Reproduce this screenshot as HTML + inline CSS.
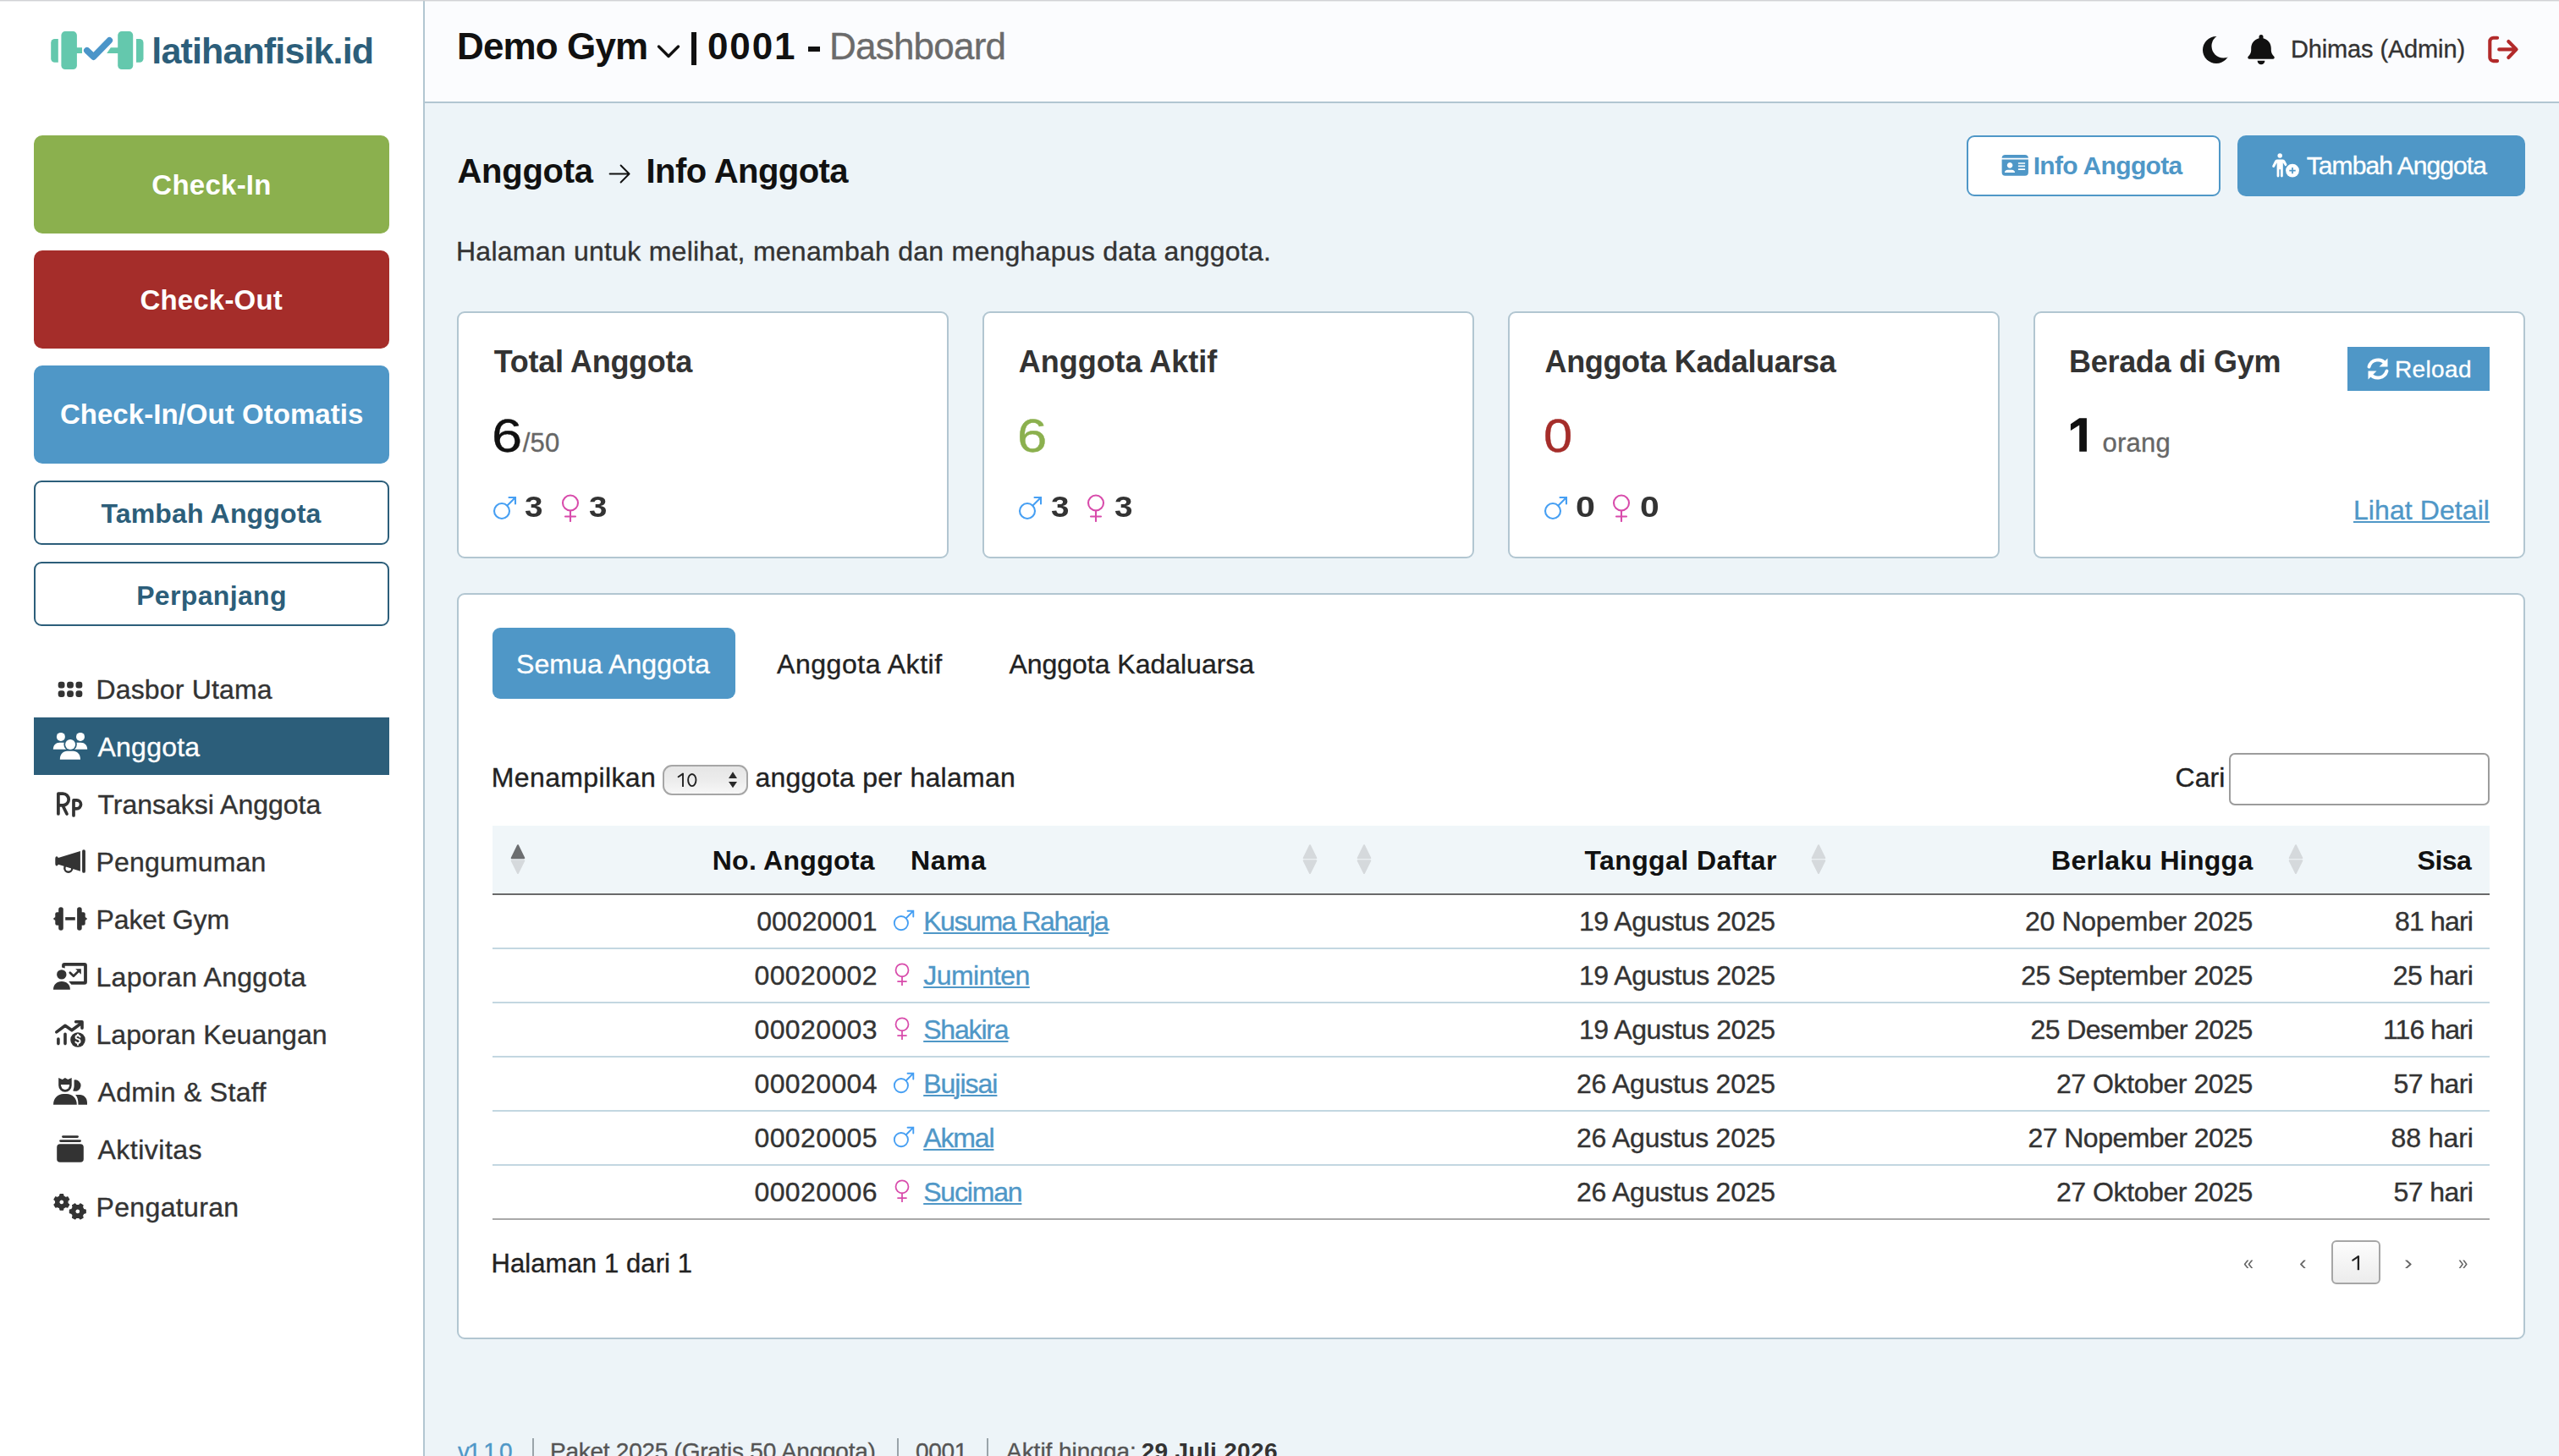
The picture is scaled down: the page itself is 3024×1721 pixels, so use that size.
<!DOCTYPE html>
<html><head><meta charset="utf-8"><title>Anggota - latihanfisik.id</title>
<style>
html,body{margin:0;padding:0;}
body{width:3024px;height:1721px;overflow:hidden;position:relative;font-family:"Liberation Sans", sans-serif;}
.t{position:absolute;white-space:nowrap;line-height:0;height:0;}
.r{position:absolute;display:block;}
@media (max-width:2000px){body{zoom:0.5;}}
</style></head><body>
<div class="r" style="left:0px;top:0px;width:3024px;height:1721px;background:#edf4f8"></div>
<div class="r" style="left:0px;top:0px;width:500px;height:1721px;background:#ffffff"></div>
<div class="r" style="left:500px;top:0px;width:2px;height:1721px;background:#b2c6d1"></div>
<div class="r" style="left:502px;top:0px;width:2522px;height:120px;background:#fbfcfe"></div>
<div class="r" style="left:502px;top:120px;width:2522px;height:2px;background:#b2c6d1"></div>
<div class="r" style="left:0px;top:0px;width:3024px;height:1px;background:#d1d2d5"></div>
<div class="r" style="left:0px;top:1px;width:3024px;height:1px;background:rgba(200,202,206,0.35)"></div>
<svg class="r" style="left:50px;top:30px" width="130" height="60" viewBox="0 0 130 60"><g fill="#64c8ad"><path d="M18.8 16 H14.7 A4.5 4.5 0 0 0 10.2 20.5 V39.2 A4.5 4.5 0 0 0 14.7 43.7 H18.8 Z"/><rect x="22.4" y="7.1" width="18.5" height="45" rx="4.6"/><rect x="40" y="26.2" width="7" height="6.8"/><path d="M80.8 26.2 H90 V33 H76.2 Z"/><rect x="89.2" y="7.1" width="18" height="45" rx="4.6"/><path d="M111 16 H115 A4.5 4.5 0 0 1 119.5 20.5 V39.2 A4.5 4.5 0 0 1 115 43.7 H111 Z"/></g><path d="M52.8 29.7 L60.5 37.1 L79.3 17.8" fill="none" stroke="#fff" stroke-width="11.5" stroke-linecap="round" stroke-linejoin="round"/><path d="M52.8 29.7 L60.5 37.1 L79.3 17.8" fill="none" stroke="#4b95c9" stroke-width="7.6" stroke-linecap="round" stroke-linejoin="round"/></svg>
<div class="t" style="top:59.6px;font-size:43px;font-weight:700;color:#2c5e7a;left:179.30px;letter-spacing:-0.858px;">latihanfisik.id</div>
<div class="r" style="left:40px;top:160px;width:420px;height:116px;background:#8bb04e;border-radius:10px"></div>
<div class="r" style="left:40px;top:296px;width:420px;height:116px;background:#a52d2a;border-radius:10px"></div>
<div class="r" style="left:40px;top:432px;width:420px;height:116px;background:#4f97c7;border-radius:10px"></div>
<div class="r" style="left:40px;top:568px;width:420px;height:76px;background:#fff;border:2px solid #2c5e7a;border-radius:9px;box-sizing:border-box"></div>
<div class="r" style="left:40px;top:664px;width:420px;height:76px;background:#fff;border:2px solid #2c5e7a;border-radius:9px;box-sizing:border-box"></div>
<div class="t" style="top:218.6px;font-size:33px;font-weight:700;color:#fff;left:179.30px;letter-spacing:0.256px;">Check-In</div>
<div class="t" style="top:354.9px;font-size:33px;font-weight:700;color:#fff;left:165.50px;letter-spacing:0.167px;">Check-Out</div>
<div class="t" style="top:490.1px;font-size:33px;font-weight:700;color:#fff;left:70.90px;letter-spacing:0.046px;">Check-In/Out Otomatis</div>
<div class="t" style="top:607.0px;font-size:32px;font-weight:700;color:#2c5e7a;left:119.40px;letter-spacing:0.173px;">Tambah Anggota</div>
<div class="t" style="top:703.5px;font-size:32px;font-weight:700;color:#2c5e7a;left:161.20px;letter-spacing:0.342px;">Perpanjang</div>
<div class="r" style="left:40px;top:848px;width:420px;height:68px;background:#2c5e7a"></div>
<div class="t" style="top:814.8px;font-size:32px;font-weight:400;color:#333333;-webkit-text-stroke:0.35px currentColor;left:113.50px;letter-spacing:0.155px;">Dasbor Utama</div>
<div class="t" style="top:882.8px;font-size:32px;font-weight:400;color:#fff;-webkit-text-stroke:0.35px currentColor;left:115.50px;letter-spacing:0.230px;">Anggota</div>
<div class="t" style="top:950.8px;font-size:32px;font-weight:400;color:#333333;-webkit-text-stroke:0.35px currentColor;left:115.50px;letter-spacing:-0.008px;">Transaksi Anggota</div>
<div class="t" style="top:1018.8px;font-size:32px;font-weight:400;color:#333333;-webkit-text-stroke:0.35px currentColor;left:113.50px;letter-spacing:0.174px;">Pengumuman</div>
<div class="t" style="top:1086.8px;font-size:32px;font-weight:400;color:#333333;-webkit-text-stroke:0.35px currentColor;left:113.50px;letter-spacing:-0.089px;">Paket Gym</div>
<div class="t" style="top:1154.8px;font-size:32px;font-weight:400;color:#333333;-webkit-text-stroke:0.35px currentColor;left:113.50px;letter-spacing:0.304px;">Laporan Anggota</div>
<div class="t" style="top:1222.8px;font-size:32px;font-weight:400;color:#333333;-webkit-text-stroke:0.35px currentColor;left:113.50px;letter-spacing:0.056px;">Laporan Keuangan</div>
<div class="t" style="top:1290.8px;font-size:32px;font-weight:400;color:#333333;-webkit-text-stroke:0.35px currentColor;left:115.50px;letter-spacing:0.311px;">Admin &amp; Staff</div>
<div class="t" style="top:1358.8px;font-size:32px;font-weight:400;color:#333333;-webkit-text-stroke:0.35px currentColor;left:115.50px;letter-spacing:0.495px;">Aktivitas</div>
<div class="t" style="top:1426.8px;font-size:32px;font-weight:400;color:#333333;-webkit-text-stroke:0.35px currentColor;left:113.50px;letter-spacing:0.348px;">Pengaturan</div>
<div class="t" style="top:55.2px;font-size:44px;font-weight:700;color:#111;left:540.00px;letter-spacing:-0.881px;">Demo Gym</div>
<svg class="r" style="left:774px;top:50px" width="32" height="22" viewBox="0 0 32 22"><path d="M4.5 5 L16 16.5 L27.5 5" fill="none" stroke="#111" stroke-width="3.4" stroke-linecap="round" stroke-linejoin="round"/></svg>
<div class="r" style="left:817px;top:38px;width:6px;height:39px;background:#111"></div>
<div class="t" style="top:55.2px;font-size:44px;font-weight:700;color:#111;left:836.00px;letter-spacing:1.863px;">0001</div>
<div class="r" style="left:955px;top:55px;width:14px;height:6px;background:#111"></div>
<div class="t" style="top:55.2px;font-size:44px;font-weight:400;color:#6b6b6b;-webkit-text-stroke:0.35px currentColor;left:980.00px;letter-spacing:-0.785px;">Dashboard</div>
<div class="t" style="top:58.0px;font-size:29px;font-weight:400;color:#333333;-webkit-text-stroke:0.35px currentColor;left:2707.00px;letter-spacing:-0.140px;">Dhimas (Admin)</div>
<div class="t" style="top:202.2px;font-size:40px;font-weight:700;color:#111;left:540.50px;letter-spacing:-0.290px;">Anggota</div>
<svg class="r" style="left:690px;top:180px" width="90" height="50" viewBox="0 0 90 50"><path d="M30.6 25.5 H53.3 M43.6 15.5 L53.6 25.5 L43.6 35.5" fill="none" stroke="#111" stroke-width="1.9" stroke-linecap="round" stroke-linejoin="round"/></svg>
<div class="t" style="top:202.2px;font-size:40px;font-weight:700;color:#111;left:763.50px;letter-spacing:-0.550px;">Info Anggota</div>
<div class="t" style="top:297.0px;font-size:32px;font-weight:400;color:#333333;-webkit-text-stroke:0.35px currentColor;left:539.00px;letter-spacing:0.254px;">Halaman untuk melihat, menambah dan menghapus data anggota.</div>
<svg class="r" style="left:2600px;top:40px" width="36" height="38" viewBox="0 0 36 38"><defs><mask id="mm"><rect width="36" height="38" fill="#fff"/><circle cx="27.5" cy="14.5" r="14" fill="#000"/></mask></defs><circle cx="19" cy="19" r="16" fill="#111" mask="url(#mm)"/></svg>
<svg class="r" style="left:2652px;top:38px" width="40" height="40" viewBox="0 0 40 40"><path fill="#111" d="M20 3 a2.5 2.5 0 0 1 2.5 2.5 V7.3 C28.5 8.6 31.8 13.6 31.8 19.5 V21.5 C31.8 24.5 33.3 26.6 35.3 28.8 a1.8 1.8 0 0 1 -1.3 3 H6 a1.8 1.8 0 0 1 -1.3 -3 C6.7 26.6 8.2 24.5 8.2 21.5 V19.5 C8.2 13.6 11.5 8.6 17.5 7.3 V5.5 A2.5 2.5 0 0 1 20 3 Z M15.6 33.8 H24.4 a4.4 4.4 0 0 1 -8.8 0 Z"/></svg>
<svg class="r" style="left:2925px;top:35px" width="60" height="47" viewBox="0 0 60 47"><g fill="none" stroke="#b22a2a" stroke-width="4.1" stroke-linecap="round" stroke-linejoin="round"><path d="M26.1 9.8 H21.5 A4.2 4.2 0 0 0 17.3 14 V32.9 A4.2 4.2 0 0 0 21.5 37.1 H26.1"/><path d="M28.2 23.4 H48 M39.3 14 L48.6 23.4 L39.3 33"/></g></svg>
<svg class="r" style="left:60px;top:800px" width="44" height="30" viewBox="0 0 44 30"><g fill="#333"><rect x="8.7" y="5.8" width="7.8" height="7.8" rx="3"/><rect x="8.7" y="16.2" width="7.8" height="7.8" rx="3"/><rect x="19.1" y="5.8" width="7.8" height="7.8" rx="3"/><rect x="19.1" y="16.2" width="7.8" height="7.8" rx="3"/><rect x="29.5" y="5.8" width="7.8" height="7.8" rx="3"/><rect x="29.5" y="16.2" width="7.8" height="7.8" rx="3"/></g></svg>
<svg class="r" style="left:58px;top:860px" width="50" height="44" viewBox="0 0 50 44"><defs><mask id="um"><rect width="50" height="44" fill="#fff"/><circle cx="25.1" cy="19.9" r="7.7" fill="#000"/></mask></defs><g fill="#fff"><circle cx="13.9" cy="10.9" r="5"/><circle cx="37" cy="10.9" r="5"/><circle cx="25.1" cy="19.9" r="6"/><g mask="url(#um)"><path d="M4.8 25.8 C4.8 21 8 17.8 12.5 17.8 H17 C20 17.8 22 19 23 21 V25.8 Z"/><path d="M45.2 25.8 C45.2 21 42 17.8 37.5 17.8 H33 C30 17.8 28 19 27 21 V25.8 Z"/></g><path d="M12.8 37.8 C12.8 31.5 16.5 27.8 21.5 27.8 H28.3 C33.3 27.8 37 31.5 37 37.8 Z"/></g></svg>
<svg class="r" style="left:58px;top:928px" width="50" height="44" viewBox="0 0 50 44"><g fill="none" stroke="#333" stroke-width="3.7" stroke-linecap="round" stroke-linejoin="round"><path d="M10.9 34 V10.1 H16.3 A6.9 6.9 0 0 1 16.3 23.9 H11 M16.2 24.3 L21 34"/><path d="M29 35.9 V17.9 H32.6 A4.95 4.95 0 0 1 32.6 27.8 H29"/></g></svg>
<svg class="r" style="left:58px;top:996px" width="50" height="44" viewBox="0 0 50 44"><circle cx="22.8" cy="30.2" r="4.5" fill="none" stroke="#333" stroke-width="2.4"/><g fill="#333"><rect x="39.1" y="8.2" width="3.8" height="27.6" rx="1.9"/><path d="M7.3 19.2 Q7.3 16.2 9 16.2 Q10.4 16.2 10.8 18.1 L36.9 10.1 V33.7 L10.8 25.8 Q10.4 27.6 9 27.6 Q7.3 27.6 7.3 24.6 Z"/></g></svg>
<svg class="r" style="left:58px;top:1064px" width="50" height="44" viewBox="0 0 50 44"><g fill="#333"><rect x="11.2" y="8.2" width="5.6" height="27.6" rx="2.8"/><rect x="7.3" y="14.2" width="6" height="15.6" rx="2"/><path d="M7.8 19.4 L4.8 21.9 L7.8 24.4 Z"/><rect x="19.2" y="20.1" width="11.6" height="3.6"/><rect x="33.1" y="8.2" width="5.6" height="27.6" rx="2.8"/><rect x="36.7" y="14.2" width="6" height="15.6" rx="2"/><path d="M42.2 19.4 L45.2 21.9 L42.2 24.4 Z"/></g></svg>
<svg class="r" style="left:58px;top:1132px" width="50" height="44" viewBox="0 0 50 44"><g fill="#333"><path d="M15.1 11.4 V9 A3 3 0 0 1 18.1 6 H41.9 A3 3 0 0 1 44.9 9 V28.7 A3 3 0 0 1 41.9 31.7 H26.3 L23.3 28.1 H41.1 V9.7 H18.7 V12.6 Z"/><circle cx="14.8" cy="19.9" r="5.7"/><path d="M5 37.8 C5 32 9 28.1 14.9 28.1 C20.9 28.1 24.9 32 24.9 37.8 Z"/><path d="M31.2 13.3 H37.8 V19.8 Z"/></g><path d="M24.8 17.8 L28.9 21.8 L35.8 14.9" fill="none" stroke="#333" stroke-width="2.7" stroke-linecap="round" stroke-linejoin="round"/></svg>
<svg class="r" style="left:58px;top:1200px" width="50" height="44" viewBox="0 0 50 44"><g fill="none" stroke="#333" stroke-width="3.6" stroke-linecap="round" stroke-linejoin="round"><path d="M8.8 19.9 L19 12.3 L26.9 17.8 L37 10.3 M31.6 7.8 H39 V15.2"/><path d="M10.9 28 V33.6 M19 22.2 V33.6"/></g><circle cx="34" cy="29" r="8.8" fill="#333"/><path d="M36.6 25.6 C36 24.4 35 24 34 24 C32.5 24 31.5 24.8 31.5 26 C31.5 27.3 32.6 27.8 34 28.2 C35.6 28.6 36.6 29.2 36.6 30.8 C36.6 32.2 35.4 33 34 33 C32.8 33 31.8 32.5 31.3 31.5 M34 22.6 V24 M34 33 V35" fill="none" stroke="#fff" stroke-width="1.9" stroke-linecap="round"/></svg>
<svg class="r" style="left:58px;top:1268px" width="50" height="44" viewBox="0 0 50 44"><g fill="#333"><path d="M11.2 6 L15.7 8 L18.9 6 L22.3 8 L26.7 6 V15.1 A7.75 7.75 0 0 1 11.2 15.1 Z"/><path d="M29.6 8.5 A6.7 6.7 0 1 1 28.2 21.2 C29.3 19 29.6 17 29.6 15 Z"/><path d="M5 37.8 C5 30 10.5 25.1 17 25.1 H20.8 C27.3 25.1 32.8 30 32.8 37.8 Z"/><path d="M34.5 37.8 C34.5 32 33.3 28.5 31.1 26.1 H36.5 C41.2 26.1 45 30 45 35.5 V37.8 Z"/></g><path d="M13.9 13.9 H24.2 A5.15 6 0 0 1 13.9 13.9 Z" fill="#fff"/></svg>
<svg class="r" style="left:58px;top:1336px" width="50" height="44" viewBox="0 0 50 44"><g fill="#333"><rect x="9.2" y="16.2" width="31.6" height="21.6" rx="3.8"/><rect x="12.2" y="11.2" width="25.7" height="2.7" rx="1.35"/><rect x="15.1" y="6.2" width="19.8" height="2.7" rx="1.35"/></g></svg>
<svg class="r" style="left:58px;top:1404px" width="50" height="44" viewBox="0 0 50 44"><path fill="#333" stroke="#333" stroke-width="1.2" stroke-linejoin="round" fill-rule="evenodd" d="M11.20,10.66 L12.46,10.09 L13.01,7.67 L16.59,7.67 L17.14,10.09 L18.40,10.66 L19.52,11.47 L21.89,10.73 L23.69,13.84 L21.87,15.53 L22.00,16.90 L21.87,18.27 L23.69,19.96 L21.89,23.07 L19.52,22.33 L18.40,23.14 L17.14,23.71 L16.59,26.13 L13.01,26.13 L12.46,23.71 L11.20,23.14 L10.08,22.33 L7.71,23.07 L5.91,19.96 L7.73,18.27 L7.60,16.90 L7.73,15.53 L5.91,13.84 L7.71,10.73 L10.08,11.47 Z M14.8 13.9 A3 3 0 1 0 14.81 13.9 Z M40.21,24.20 L40.80,25.49 L43.22,26.07 L43.22,29.73 L40.80,30.31 L40.21,31.60 L39.38,32.75 L40.10,35.15 L36.93,36.98 L35.21,35.16 L33.80,35.30 L32.39,35.16 L30.67,36.98 L27.50,35.15 L28.22,32.75 L27.39,31.60 L26.80,30.31 L24.38,29.73 L24.38,26.07 L26.80,25.49 L27.39,24.20 L28.22,23.05 L27.50,20.65 L30.67,18.82 L32.39,20.64 L33.80,20.50 L35.21,20.64 L36.93,18.82 L40.10,20.65 L39.38,23.05 Z M33.8 24.9 A3 3 0 1 0 33.81 24.9 Z"/></svg>
<div class="r" style="left:2324px;top:160px;width:300px;height:72px;background:#fff;border:2px solid #4f97c7;border-radius:9px;box-sizing:border-box"></div>
<svg class="r" style="left:2350px;top:170px" width="50" height="50" viewBox="0 0 50 50"><path fill="#4f97c7" fill-rule="evenodd" d="M19.6 13.1 H42.9 A4 4 0 0 1 46.9 16.8 H15.6 A4 4 0 0 1 19.6 13.1 Z M15.6 18.5 H46.9 V33.8 A4 4 0 0 1 42.9 37.8 H19.6 A4 4 0 0 1 15.6 33.8 Z M25.1 22.1 A3.3 3.3 0 1 0 25.11 22.1 Z M18.9 34 C18.9 32 20.5 30.7 22.5 30.7 H27.5 C29.5 30.7 31.1 32 31.1 34 Z M34.9 22.2 H43.1 V23.8 H34.9 Z M34.9 25.6 H43.1 V27.2 H34.9 Z M34.9 29.2 H43.1 V30.9 H34.9 Z"/></svg>
<div class="t" style="top:196.0px;font-size:30px;font-weight:700;color:#4f97c7;left:2402.70px;letter-spacing:-0.661px;">Info Anggota</div>
<div class="r" style="left:2644px;top:160px;width:340px;height:72px;background:#4f97c7;border-radius:10px"></div>
<svg class="r" style="left:2675px;top:170px" width="50" height="50" viewBox="0 0 50 50"><defs><mask id="pm"><rect width="50" height="50" fill="#fff"/><circle cx="34" cy="31.6" r="9.4" fill="#000"/></mask></defs><g fill="#fff"><circle cx="19.2" cy="14.1" r="2.75"/><path mask="url(#pm)" d="M15.8 18.5 H22.6 C24 18.5 24.8 19.3 25.5 20.6 L27.6 24.4 A1.5 1.5 0 0 1 25 25.8 L22.8 22.3 V38 A1.4 1.4 0 0 1 20 38 V30.2 H18.4 V38 A1.4 1.4 0 0 1 15.6 38 V22.3 L13 27.2 A1.5 1.5 0 0 1 10.4 25.7 L13 20.6 C13.7 19.3 14.4 18.5 15.8 18.5 Z"/><circle cx="34" cy="31.6" r="7.9"/></g><path d="M34 28 V35.3 M30.3 31.6 H37.7" stroke="#4f97c7" stroke-width="1.7" stroke-linecap="butt"/></svg>
<div class="t" style="top:196.0px;font-size:30px;font-weight:400;color:#fff;-webkit-text-stroke:0.35px currentColor;left:2725.80px;letter-spacing:-0.934px;">Tambah Anggota</div>
<div class="r" style="left:540px;top:368px;width:581px;height:292px;background:#fff;border:2px solid #b2c6d1;border-radius:9px;box-sizing:border-box"></div>
<div class="r" style="left:1161px;top:368px;width:581px;height:292px;background:#fff;border:2px solid #b2c6d1;border-radius:9px;box-sizing:border-box"></div>
<div class="r" style="left:1782px;top:368px;width:581px;height:292px;background:#fff;border:2px solid #b2c6d1;border-radius:9px;box-sizing:border-box"></div>
<div class="r" style="left:2403px;top:368px;width:581px;height:292px;background:#fff;border:2px solid #b2c6d1;border-radius:9px;box-sizing:border-box"></div>
<div class="t" style="top:427.6px;font-size:36px;font-weight:700;color:#333333;left:583.70px;letter-spacing:-0.281px;">Total Anggota</div>
<div class="t" style="top:427.6px;font-size:36px;font-weight:700;color:#333333;left:1203.70px;letter-spacing:-0.007px;">Anggota Aktif</div>
<div class="t" style="top:427.6px;font-size:36px;font-weight:700;color:#333333;left:1825.50px;letter-spacing:-0.338px;">Anggota Kadaluarsa</div>
<div class="t" style="top:427.6px;font-size:36px;font-weight:700;color:#333333;left:2445.00px;letter-spacing:-0.299px;">Berada di Gym</div>
<div class="t" style="top:514.9px;font-size:56px;font-weight:400;color:#111;-webkit-text-stroke:0.35px currentColor;left:581.38px;transform:scaleX(1.1593);transform-origin:0 0;">6</div>
<div class="t" style="top:523.9px;font-size:31px;font-weight:400;color:#666;-webkit-text-stroke:0.35px currentColor;left:617.70px;letter-spacing:0.173px;">/50</div>
<div class="t" style="top:514.9px;font-size:56px;font-weight:400;color:#8bb04e;-webkit-text-stroke:0.35px currentColor;left:1202.23px;transform:scaleX(1.1333);transform-origin:0 0;">6</div>
<div class="t" style="top:514.7px;font-size:56px;font-weight:400;color:#a52d2a;-webkit-text-stroke:0.35px currentColor;left:1824.10px;transform:scaleX(1.1000);transform-origin:0 0;">0</div>
<svg class="r" style="left:2440px;top:490px" width="30" height="50" viewBox="0 0 30 50"><path fill="#111" d="M17.2 4.3 H25.9 V43.8 H17.2 V12.6 L6.9 18.9 V11.2 Z"/></svg>
<div class="t" style="top:523.5px;font-size:31px;font-weight:400;color:#666;-webkit-text-stroke:0.35px currentColor;left:2484.60px;letter-spacing:0.189px;">orang</div>
<svg class="r" style="left:582px;top:584.5px" width="30" height="30" viewBox="0 0 30 30"><g fill="none" stroke="#469ff3" stroke-width="2.1" stroke-linecap="round"><circle cx="11" cy="19" r="9"/><path d="M17.5 12.5 L27 3 M19.5 3 H27 V10.5"/></g></svg>
<svg class="r" style="left:661.5px;top:583.5px" width="24.0" height="33.0" viewBox="0 0 24 33"><g fill="none" stroke="#d84bab" stroke-width="2.1" stroke-linecap="round"><circle cx="12" cy="10.5" r="9"/><path d="M12 19.5 V32 M6 26.5 H18"/></g></svg>
<div class="t" style="top:599.1px;font-size:35px;font-weight:700;color:#333333;left:620.00px;transform:scaleX(1.1053);transform-origin:0 0;">3</div>
<div class="t" style="top:599.1px;font-size:35px;font-weight:700;color:#333333;left:695.50px;transform:scaleX(1.1000);transform-origin:0 0;">3</div>
<svg class="r" style="left:1203px;top:584.5px" width="30" height="30" viewBox="0 0 30 30"><g fill="none" stroke="#469ff3" stroke-width="2.1" stroke-linecap="round"><circle cx="11" cy="19" r="9"/><path d="M17.5 12.5 L27 3 M19.5 3 H27 V10.5"/></g></svg>
<svg class="r" style="left:1282.5px;top:583.5px" width="24.0" height="33.0" viewBox="0 0 24 33"><g fill="none" stroke="#d84bab" stroke-width="2.1" stroke-linecap="round"><circle cx="12" cy="10.5" r="9"/><path d="M12 19.5 V32 M6 26.5 H18"/></g></svg>
<div class="t" style="top:599.1px;font-size:35px;font-weight:700;color:#333333;left:1241.60px;transform:scaleX(1.1053);transform-origin:0 0;">3</div>
<div class="t" style="top:599.1px;font-size:35px;font-weight:700;color:#333333;left:1316.50px;transform:scaleX(1.1053);transform-origin:0 0;">3</div>
<svg class="r" style="left:1824px;top:584.5px" width="30" height="30" viewBox="0 0 30 30"><g fill="none" stroke="#469ff3" stroke-width="2.1" stroke-linecap="round"><circle cx="11" cy="19" r="9"/><path d="M17.5 12.5 L27 3 M19.5 3 H27 V10.5"/></g></svg>
<svg class="r" style="left:1903.5px;top:583.5px" width="24.0" height="33.0" viewBox="0 0 24 33"><g fill="none" stroke="#d84bab" stroke-width="2.1" stroke-linecap="round"><circle cx="12" cy="10.5" r="9"/><path d="M12 19.5 V32 M6 26.5 H18"/></g></svg>
<div class="t" style="top:599.1px;font-size:35px;font-weight:700;color:#333333;left:1861.62px;transform:scaleX(1.1778);transform-origin:0 0;">0</div>
<div class="t" style="top:599.1px;font-size:35px;font-weight:700;color:#333333;left:1937.73px;transform:scaleX(1.1667);transform-origin:0 0;">0</div>
<div class="r" style="left:2774px;top:410px;width:168px;height:52px;background:#4f97c7"></div>
<svg class="r" style="left:2794px;top:421px" width="32" height="30" viewBox="0 0 32 30"><g fill="none" stroke="#fff" stroke-width="4" stroke-linecap="round"><path d="M5.5 12.5 A11 11 0 0 1 25 9"/><path d="M26.5 17.5 A11 11 0 0 1 7 21"/></g><g fill="#fff"><path d="M27.5 2.5 V12.5 H17.5 Z"/><path d="M4.5 27.5 V17.5 H14.5 Z"/></g></svg>
<div class="t" style="top:436.7px;font-size:28px;font-weight:400;color:#fff;-webkit-text-stroke:0.35px currentColor;left:2830.00px;letter-spacing:0.368px;">Reload</div>
<div class="t" style="top:603.4px;font-size:32px;font-weight:400;color:#4f97c7;-webkit-text-stroke:0.35px currentColor;left:2781.00px;letter-spacing:0.076px;text-decoration:underline;text-decoration-thickness:2px;text-underline-offset:2px;">Lihat Detail</div>
<div class="r" style="left:540px;top:701px;width:2444px;height:882px;background:#fff;border:2px solid #b2c6d1;border-radius:9px;box-sizing:border-box"></div>
<div class="r" style="left:582px;top:742px;width:287px;height:84px;background:#4f97c7;border-radius:9px"></div>
<div class="t" style="top:785.3px;font-size:32px;font-weight:400;color:#fff;-webkit-text-stroke:0.35px currentColor;left:610.00px;letter-spacing:0.083px;">Semua Anggota</div>
<div class="t" style="top:785.3px;font-size:32px;font-weight:400;color:#222;-webkit-text-stroke:0.35px currentColor;left:918.00px;letter-spacing:0.546px;">Anggota Aktif</div>
<div class="t" style="top:785.3px;font-size:32px;font-weight:400;color:#222;-webkit-text-stroke:0.35px currentColor;left:1192.40px;letter-spacing:-0.018px;">Anggota Kadaluarsa</div>
<div class="t" style="top:919.3px;font-size:32px;font-weight:400;color:#222;-webkit-text-stroke:0.35px currentColor;left:580.80px;letter-spacing:0.368px;">Menampilkan</div>
<div class="r" style="left:783px;top:904px;width:101px;height:36px;background:linear-gradient(#e6e6e6,#ececec 50%,#f7f7f7);border:2px solid #a6a6a6;border-radius:11px;box-sizing:border-box"></div>
<svg class="r" style="left:795px;top:908px" width="35" height="28" viewBox="0 0 35 28"><g fill="none" stroke="#222" stroke-width="1.9"><path d="M12 6 V22.1"/><path d="M12 6.6 L6.6 10.2" stroke-linecap="round"/><ellipse cx="22.8" cy="14.05" rx="4.65" ry="7.1"/></g></svg>
<svg class="r" style="left:860px;top:911px" width="12" height="22" viewBox="0 0 12 22"><path d="M6 1.3 L11 9 H1 Z M6 20.3 L11 13 H1 Z" fill="#2a2a2a"/></svg>
<div class="t" style="top:919.3px;font-size:32px;font-weight:400;color:#222;-webkit-text-stroke:0.35px currentColor;left:892.40px;letter-spacing:0.275px;">anggota per halaman</div>
<div class="t" style="top:919.2px;font-size:32px;font-weight:400;color:#222;-webkit-text-stroke:0.35px currentColor;left:2570.50px;letter-spacing:0.046px;">Cari</div>
<div class="r" style="left:2634px;top:890px;width:308px;height:62px;background:#fff;border:2px solid #9c9c9c;border-radius:7px;box-sizing:border-box"></div>
<div class="r" style="left:582px;top:976px;width:2360px;height:80px;background:#f0f6f9"></div>
<div class="r" style="left:582px;top:1056px;width:2360px;height:2px;background:#6a6a6a"></div>
<svg class="r" style="left:603px;top:997px" width="18" height="38" viewBox="0 0 18 38"><path d="M9 2.2 L16.3 17.2 H1.7 Z" fill="#6c6e70" stroke="#6c6e70" stroke-width="2" stroke-linejoin="round"/><path d="M9 35 L16.3 20.3 H1.7 Z" fill="#d5d9dc" stroke="#d5d9dc" stroke-width="2" stroke-linejoin="round"/></svg>
<svg class="r" style="left:1539px;top:997px" width="18" height="38" viewBox="0 0 18 38"><path d="M9 2.2 L16.3 17.2 H1.7 Z" fill="#d5d9dc" stroke="#d5d9dc" stroke-width="2" stroke-linejoin="round"/><path d="M9 35 L16.3 20.3 H1.7 Z" fill="#d5d9dc" stroke="#d5d9dc" stroke-width="2" stroke-linejoin="round"/></svg>
<svg class="r" style="left:1603px;top:997px" width="18" height="38" viewBox="0 0 18 38"><path d="M9 2.2 L16.3 17.2 H1.7 Z" fill="#d5d9dc" stroke="#d5d9dc" stroke-width="2" stroke-linejoin="round"/><path d="M9 35 L16.3 20.3 H1.7 Z" fill="#d5d9dc" stroke="#d5d9dc" stroke-width="2" stroke-linejoin="round"/></svg>
<svg class="r" style="left:2140px;top:997px" width="18" height="38" viewBox="0 0 18 38"><path d="M9 2.2 L16.3 17.2 H1.7 Z" fill="#d5d9dc" stroke="#d5d9dc" stroke-width="2" stroke-linejoin="round"/><path d="M9 35 L16.3 20.3 H1.7 Z" fill="#d5d9dc" stroke="#d5d9dc" stroke-width="2" stroke-linejoin="round"/></svg>
<svg class="r" style="left:2704px;top:997px" width="18" height="38" viewBox="0 0 18 38"><path d="M9 2.2 L16.3 17.2 H1.7 Z" fill="#d5d9dc" stroke="#d5d9dc" stroke-width="2" stroke-linejoin="round"/><path d="M9 35 L16.3 20.3 H1.7 Z" fill="#d5d9dc" stroke="#d5d9dc" stroke-width="2" stroke-linejoin="round"/></svg>
<div class="t" style="top:1016.9px;font-size:32px;font-weight:700;color:#111;left:841.70px;letter-spacing:0.291px;">No. Anggota</div>
<div class="t" style="top:1016.9px;font-size:32px;font-weight:700;color:#111;left:1076.00px;letter-spacing:0.647px;">Nama</div>
<div class="t" style="top:1016.9px;font-size:32px;font-weight:700;color:#111;left:1872.40px;letter-spacing:0.415px;">Tanggal Daftar</div>
<div class="t" style="top:1016.9px;font-size:32px;font-weight:700;color:#111;left:2424.00px;letter-spacing:0.268px;">Berlaku Hingga</div>
<div class="t" style="top:1016.9px;font-size:32px;font-weight:700;color:#111;left:2856.60px;letter-spacing:-0.544px;">Sisa</div>
<div class="t" style="top:1088.9px;font-size:32px;font-weight:400;color:#333333;-webkit-text-stroke:0.35px currentColor;left:894.30px;letter-spacing:-0.011px;">00020001</div>
<svg class="r" style="left:1055px;top:1074px" width="27" height="27" viewBox="0 0 30 30"><g fill="none" stroke="#469ff3" stroke-width="2.1" stroke-linecap="round"><circle cx="11" cy="19" r="9"/><path d="M17.5 12.5 L27 3 M19.5 3 H27 V10.5"/></g></svg>
<div class="t" style="top:1088.9px;font-size:32px;font-weight:400;color:#4f97c7;-webkit-text-stroke:0.35px currentColor;left:1091.20px;letter-spacing:-1.432px;text-decoration:underline;text-decoration-thickness:2px;text-underline-offset:2px;">Kusuma Raharja</div>
<div class="t" style="top:1088.9px;font-size:32px;font-weight:400;color:#333333;-webkit-text-stroke:0.35px currentColor;left:1866.00px;letter-spacing:-0.456px;">19 Agustus 2025</div>
<div class="t" style="top:1088.9px;font-size:32px;font-weight:400;color:#333333;-webkit-text-stroke:0.35px currentColor;left:2393.00px;letter-spacing:-0.305px;">20 Nopember 2025</div>
<div class="t" style="top:1088.9px;font-size:32px;font-weight:400;color:#333333;-webkit-text-stroke:0.35px currentColor;left:2830.00px;letter-spacing:-0.822px;">81 hari</div>
<div class="r" style="left:582px;top:1120px;width:2360px;height:2px;background:#c3d7e1"></div>
<div class="t" style="top:1152.9px;font-size:32px;font-weight:400;color:#333333;-webkit-text-stroke:0.35px currentColor;left:891.50px;letter-spacing:0.389px;">00020002</div>
<svg class="r" style="left:1055.5px;top:1137.5px" width="20.0" height="27.500000000000004" viewBox="0 0 24 33"><g fill="none" stroke="#d84bab" stroke-width="2.1" stroke-linecap="round"><circle cx="12" cy="10.5" r="9"/><path d="M12 19.5 V32 M6 26.5 H18"/></g></svg>
<div class="t" style="top:1152.9px;font-size:32px;font-weight:400;color:#4f97c7;-webkit-text-stroke:0.35px currentColor;left:1091.20px;letter-spacing:-0.530px;text-decoration:underline;text-decoration-thickness:2px;text-underline-offset:2px;">Juminten</div>
<div class="t" style="top:1152.9px;font-size:32px;font-weight:400;color:#333333;-webkit-text-stroke:0.35px currentColor;left:1866.00px;letter-spacing:-0.456px;">19 Agustus 2025</div>
<div class="t" style="top:1152.9px;font-size:32px;font-weight:400;color:#333333;-webkit-text-stroke:0.35px currentColor;left:2388.20px;letter-spacing:-0.431px;">25 September 2025</div>
<div class="t" style="top:1152.9px;font-size:32px;font-weight:400;color:#333333;-webkit-text-stroke:0.35px currentColor;left:2827.70px;letter-spacing:-0.439px;">25 hari</div>
<div class="r" style="left:582px;top:1184px;width:2360px;height:2px;background:#c3d7e1"></div>
<div class="t" style="top:1216.9px;font-size:32px;font-weight:400;color:#333333;-webkit-text-stroke:0.35px currentColor;left:891.50px;letter-spacing:0.389px;">00020003</div>
<svg class="r" style="left:1055.5px;top:1201.5px" width="20.0" height="27.500000000000004" viewBox="0 0 24 33"><g fill="none" stroke="#d84bab" stroke-width="2.1" stroke-linecap="round"><circle cx="12" cy="10.5" r="9"/><path d="M12 19.5 V32 M6 26.5 H18"/></g></svg>
<div class="t" style="top:1216.9px;font-size:32px;font-weight:400;color:#4f97c7;-webkit-text-stroke:0.35px currentColor;left:1091.20px;letter-spacing:-1.186px;text-decoration:underline;text-decoration-thickness:2px;text-underline-offset:2px;">Shakira</div>
<div class="t" style="top:1216.9px;font-size:32px;font-weight:400;color:#333333;-webkit-text-stroke:0.35px currentColor;left:1866.00px;letter-spacing:-0.456px;">19 Agustus 2025</div>
<div class="t" style="top:1216.9px;font-size:32px;font-weight:400;color:#333333;-webkit-text-stroke:0.35px currentColor;left:2399.60px;letter-spacing:-0.625px;">25 Desember 2025</div>
<div class="t" style="top:1216.9px;font-size:32px;font-weight:400;color:#333333;-webkit-text-stroke:0.35px currentColor;left:2816.10px;letter-spacing:-0.922px;">116 hari</div>
<div class="r" style="left:582px;top:1248px;width:2360px;height:2px;background:#c3d7e1"></div>
<div class="t" style="top:1280.9px;font-size:32px;font-weight:400;color:#333333;-webkit-text-stroke:0.35px currentColor;left:891.50px;letter-spacing:0.389px;">00020004</div>
<svg class="r" style="left:1055px;top:1266px" width="27" height="27" viewBox="0 0 30 30"><g fill="none" stroke="#469ff3" stroke-width="2.1" stroke-linecap="round"><circle cx="11" cy="19" r="9"/><path d="M17.5 12.5 L27 3 M19.5 3 H27 V10.5"/></g></svg>
<div class="t" style="top:1280.9px;font-size:32px;font-weight:400;color:#4f97c7;-webkit-text-stroke:0.35px currentColor;left:1091.20px;letter-spacing:-1.009px;text-decoration:underline;text-decoration-thickness:2px;text-underline-offset:2px;">Bujisai</div>
<div class="t" style="top:1280.9px;font-size:32px;font-weight:400;color:#333333;-webkit-text-stroke:0.35px currentColor;left:1863.00px;letter-spacing:-0.242px;">26 Agustus 2025</div>
<div class="t" style="top:1280.9px;font-size:32px;font-weight:400;color:#333333;-webkit-text-stroke:0.35px currentColor;left:2429.90px;letter-spacing:-0.421px;">27 Oktober 2025</div>
<div class="t" style="top:1280.9px;font-size:32px;font-weight:400;color:#333333;-webkit-text-stroke:0.35px currentColor;left:2828.50px;letter-spacing:-0.572px;">57 hari</div>
<div class="r" style="left:582px;top:1312px;width:2360px;height:2px;background:#c3d7e1"></div>
<div class="t" style="top:1344.9px;font-size:32px;font-weight:400;color:#333333;-webkit-text-stroke:0.35px currentColor;left:891.50px;letter-spacing:0.389px;">00020005</div>
<svg class="r" style="left:1055px;top:1330px" width="27" height="27" viewBox="0 0 30 30"><g fill="none" stroke="#469ff3" stroke-width="2.1" stroke-linecap="round"><circle cx="11" cy="19" r="9"/><path d="M17.5 12.5 L27 3 M19.5 3 H27 V10.5"/></g></svg>
<div class="t" style="top:1344.9px;font-size:32px;font-weight:400;color:#4f97c7;-webkit-text-stroke:0.35px currentColor;left:1091.20px;letter-spacing:-1.121px;text-decoration:underline;text-decoration-thickness:2px;text-underline-offset:2px;">Akmal</div>
<div class="t" style="top:1344.9px;font-size:32px;font-weight:400;color:#333333;-webkit-text-stroke:0.35px currentColor;left:1863.00px;letter-spacing:-0.242px;">26 Agustus 2025</div>
<div class="t" style="top:1344.9px;font-size:32px;font-weight:400;color:#333333;-webkit-text-stroke:0.35px currentColor;left:2396.40px;letter-spacing:-0.531px;">27 Nopember 2025</div>
<div class="t" style="top:1344.9px;font-size:32px;font-weight:400;color:#333333;-webkit-text-stroke:0.35px currentColor;left:2825.60px;letter-spacing:-0.089px;">88 hari</div>
<div class="r" style="left:582px;top:1376px;width:2360px;height:2px;background:#c3d7e1"></div>
<div class="t" style="top:1408.9px;font-size:32px;font-weight:400;color:#333333;-webkit-text-stroke:0.35px currentColor;left:891.50px;letter-spacing:0.389px;">00020006</div>
<svg class="r" style="left:1055.5px;top:1393.5px" width="20.0" height="27.500000000000004" viewBox="0 0 24 33"><g fill="none" stroke="#d84bab" stroke-width="2.1" stroke-linecap="round"><circle cx="12" cy="10.5" r="9"/><path d="M12 19.5 V32 M6 26.5 H18"/></g></svg>
<div class="t" style="top:1408.9px;font-size:32px;font-weight:400;color:#4f97c7;-webkit-text-stroke:0.35px currentColor;left:1091.20px;letter-spacing:-1.186px;text-decoration:underline;text-decoration-thickness:2px;text-underline-offset:2px;">Suciman</div>
<div class="t" style="top:1408.9px;font-size:32px;font-weight:400;color:#333333;-webkit-text-stroke:0.35px currentColor;left:1863.00px;letter-spacing:-0.242px;">26 Agustus 2025</div>
<div class="t" style="top:1408.9px;font-size:32px;font-weight:400;color:#333333;-webkit-text-stroke:0.35px currentColor;left:2429.90px;letter-spacing:-0.421px;">27 Oktober 2025</div>
<div class="t" style="top:1408.9px;font-size:32px;font-weight:400;color:#333333;-webkit-text-stroke:0.35px currentColor;left:2828.50px;letter-spacing:-0.572px;">57 hari</div>
<div class="r" style="left:582px;top:1440px;width:2360px;height:2px;background:#a9a9a9"></div>
<div class="t" style="top:1494.2px;font-size:31px;font-weight:400;color:#222;-webkit-text-stroke:0.35px currentColor;left:580.40px;letter-spacing:0.105px;">Halaman 1 dari 1</div>
<div class="r" style="left:2755px;top:1466px;width:58px;height:52px;background:linear-gradient(#fdfdfd,#ececec);border:2px solid #a6a6a6;border-radius:6px;box-sizing:border-box"></div>
<svg class="r" style="left:2775px;top:1480px" width="20" height="26" viewBox="0 0 20 26"><path d="M11.9 4.6 V21.2" stroke="#222" stroke-width="2.3"/><path d="M11.9 5.2 L5.3 9.6" stroke="#222" stroke-width="2.1" stroke-linecap="round"/></svg>
<div class="t" style="top:1493.3px;font-size:24px;font-weight:400;color:#666;left:2651.40px;transform:scaleX(0.8923);transform-origin:0 0;">«</div>
<div class="t" style="top:1493.3px;font-size:24px;font-weight:400;color:#666;left:2717.42px;transform:scaleX(1.0833);transform-origin:0 0;">‹</div>
<div class="t" style="top:1493.3px;font-size:24px;font-weight:400;color:#666;left:2840.77px;transform:scaleX(1.2333);transform-origin:0 0;">›</div>
<div class="t" style="top:1493.3px;font-size:24px;font-weight:400;color:#666;left:2905.00px;transform:scaleX(0.8462);transform-origin:0 0;">»</div>
<div class="t" style="top:1716.0px;font-size:28px;font-weight:400;color:#4f97c7;-webkit-text-stroke:0.35px currentColor;left:541.00px;letter-spacing:-2.341px;">v1.1.0</div>
<div class="r" style="left:629px;top:1700px;width:2px;height:21px;background:#9aa4aa"></div>
<div class="t" style="top:1716.0px;font-size:28px;font-weight:400;color:#555;-webkit-text-stroke:0.35px currentColor;left:650.00px;letter-spacing:-0.257px;">Paket 2025 (Gratis 50 Anggota)</div>
<div class="r" style="left:1060px;top:1700px;width:2px;height:21px;background:#9aa4aa"></div>
<div class="t" style="top:1716.0px;font-size:28px;font-weight:400;color:#555;-webkit-text-stroke:0.35px currentColor;left:1082.00px;letter-spacing:-0.339px;">0001</div>
<div class="r" style="left:1166px;top:1700px;width:2px;height:21px;background:#9aa4aa"></div>
<div class="t" style="top:1716.0px;font-size:28px;font-weight:400;color:#555;-webkit-text-stroke:0.35px currentColor;left:1189.00px;letter-spacing:-0.026px;">Aktif hingga:</div>
<div class="t" style="top:1716.0px;font-size:28px;font-weight:700;color:#333;left:1348.70px;letter-spacing:0.322px;">29 Juli 2026</div>
</body></html>
